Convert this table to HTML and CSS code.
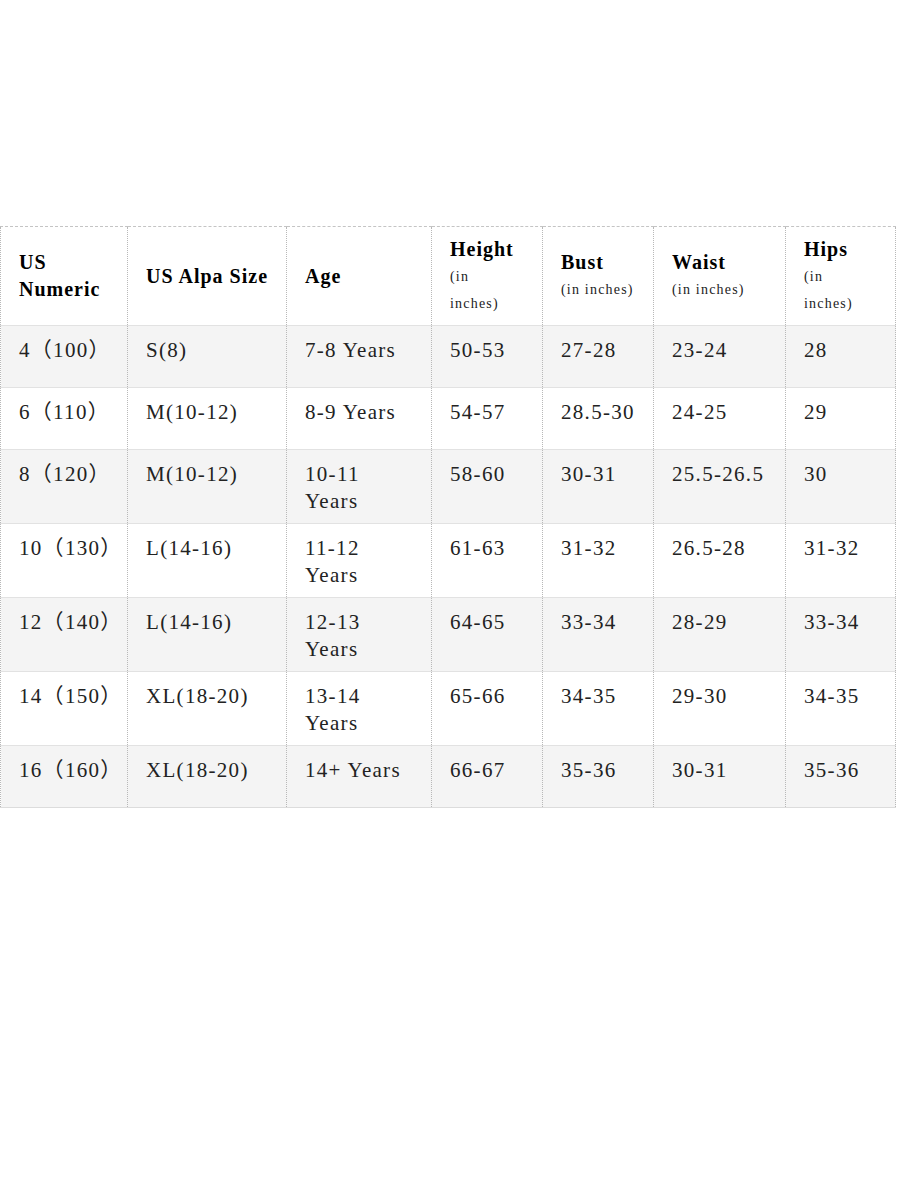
FILE: index.html
```html
<!DOCTYPE html>
<html>
<head>
<meta charset="utf-8">
<link rel="stylesheet" href="styles.css">
</head>
<body>
<table class="size-table">
  <colgroup>
    <col class="c1"><col class="c2"><col class="c3"><col class="c4"><col class="c5"><col class="c6"><col class="c7">
  </colgroup>
  <thead>
    <tr class="head-row">
      <th>US<br>Numeric</th>
      <th>US Alpa Size</th>
      <th>Age</th>
      <th>Height<span class="unit">(in<br>inches)</span></th>
      <th>Bust<span class="unit">(in inches)</span></th>
      <th>Waist<span class="unit">(in inches)</span></th>
      <th>Hips<span class="unit">(in<br>inches)</span></th>
    </tr>
  </thead>
  <tbody>
    <tr class="alt"><td>4（100）</td><td>S(8)</td><td>7-8 Years</td><td>50-53</td><td>27-28</td><td>23-24</td><td>28</td></tr>
    <tr><td>6（110）</td><td>M(10-12)</td><td>8-9 Years</td><td>54-57</td><td>28.5-30</td><td>24-25</td><td>29</td></tr>
    <tr class="alt"><td>8（120）</td><td>M(10-12)</td><td>10-11<br>Years</td><td>58-60</td><td>30-31</td><td>25.5-26.5</td><td>30</td></tr>
    <tr><td>10（130）</td><td>L(14-16)</td><td>11-12<br>Years</td><td>61-63</td><td>31-32</td><td>26.5-28</td><td>31-32</td></tr>
    <tr class="alt"><td>12（140）</td><td>L(14-16)</td><td>12-13<br>Years</td><td>64-65</td><td>33-34</td><td>28-29</td><td>33-34</td></tr>
    <tr><td>14（150）</td><td>XL(18-20)</td><td>13-14<br>Years</td><td>65-66</td><td>34-35</td><td>29-30</td><td>34-35</td></tr>
    <tr class="alt"><td>16（160）</td><td>XL(18-20)</td><td>14+ Years</td><td>66-67</td><td>35-36</td><td>30-31</td><td>35-36</td></tr>
  </tbody>
</table>
</body>
</html>
```
FILE: styles.css
```css
html, body {
  margin: 0;
  padding: 0;
  background: #ffffff;
}

body {
  font-family: "Liberation Serif", "Noto Sans CJK SC", serif;
}

.size-table {
  margin-top: 226px;
  width: 895px;
  border-collapse: collapse;
  table-layout: fixed;
  color: #222222;
}

.c1 { width: 127px; }
.c2 { width: 159px; }
.c3 { width: 145px; }
.c4 { width: 111px; }
.c5 { width: 111px; }
.c6 { width: 132px; }
.c7 { width: 110px; }

.size-table th,
.size-table td {
  border-left: 1px dotted #b8b8b8;
  border-right: 1px dotted #b8b8b8;
  border-bottom: 1px solid #e2e2e2;
  text-align: left;
  padding: 0 4px 0 18px;
  line-height: 27px;
}

.head-row {
  height: 99px;
}

.size-table th {
  border-top: 1px dashed #c4c4c4;
  font-size: 20px;
  font-weight: bold;
  letter-spacing: 1px;
  color: #000000;
  vertical-align: middle;
}

.unit {
  display: block;
  font-size: 14px;
  font-weight: normal;
  letter-spacing: 1.2px;
  color: #222222;
}

.size-table tbody tr {
  height: 62px;
}

.size-table td {
  font-size: 21px;
  letter-spacing: 1.3px;
  vertical-align: top;
  padding-top: 11px;
  padding-bottom: 8px;
}

.size-table tbody tr.alt {
  background: #f4f4f4;
}

.size-table tbody tr:last-child td {
  border-bottom: 1px solid #dcdcdc;
}
```
